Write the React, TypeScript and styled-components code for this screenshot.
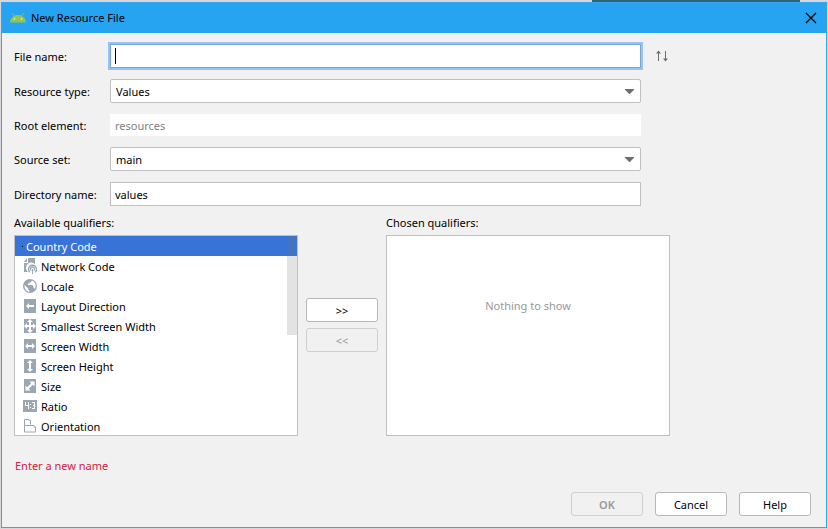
import React from "react";
import styled, { createGlobalStyle, css } from "styled-components";

const GlobalStyle = createGlobalStyle`
  *, *::before, *::after { box-sizing: border-box; }
  body { margin: 0; background: #d6d7da; }
  body, button, input, select {
    font-family: "Noto Sans", "Open Sans", sans-serif;
    font-size: 11px;
    line-height: 20px;
    color: #000;
  }
`;

const Screen = styled.div`
  display: flex;
  flex-direction: column;
  min-height: 100vh;
  padding: 0 1px 1px;
`;

const Backdrop = styled.div`
  display: flex;
  justify-content: flex-end;
  height: 2px;
  padding-right: 27px;
`;

const BackdropTab = styled.div`
  width: 208px;
  background: #2d6478;
`;

const Dialog = styled.main`
  flex: 1;
  display: flex;
  flex-direction: column;
  border: 1px solid #38a5ea;
  background: #f1f1f1;
`;

const TitleBar = styled.header`
  display: flex;
  align-items: center;
  height: 30px;
  padding: 0 9px 0 8px;
  gap: 5px;
  background: #26a4f2;
`;

const Title = styled.h1`
  flex: 1;
  margin: 0;
  font-size: 11px;
  font-weight: 400;
`;

const IconButton = styled.button`
  display: flex;
  padding: 0;
  border: 0;
  background: none;
`;

const Content = styled.div`
  display: flex;
  flex-direction: column;
  padding: 11px 156px 0 12px;
`;

const Form = styled.div`
  display: grid;
  grid-template-columns: 96px 1fr 28px;
  row-gap: 11px;
  align-items: center;
  padding-right: 1px;
`;

const Label = styled.label`
  grid-column: 1;
  padding-top: 2px;
  white-space: nowrap;
`;

const Field = styled.div`
  grid-column: 2;
  position: relative;
  display: flex;
`;

const SortCell = styled.div`
  grid-column: 3;
  display: flex;
  justify-content: flex-end;
`;

const TextInput = styled.input<{ $focused?: boolean }>`
  flex: 1;
  min-width: 0;
  height: 24px;
  padding: 1px 4px 0;
  border: 1px solid #c0c0c0;
  border-radius: 0;
  background: #fff;
  outline: none;
  ${(p) =>
    p.$focused &&
    css`
      border-color: #7ba4d9;
      box-shadow: 0 0 0 2px #97c3f3;
      caret-color: transparent;
    `}
  &:disabled {
    height: 22px;
    padding: 1px 5px 0;
    border: 0;
    color: #808080;
  }
`;

const Caret = styled.span`
  position: absolute;
  left: 5px;
  top: 4px;
  width: 1px;
  height: 16px;
  background: #000;
`;

const Select = styled.select`
  appearance: none;
  flex: 1;
  height: 24px;
  padding: 1px 24px 0 5px;
  border: 1px solid #c0c0c0;
  border-radius: 2px;
  background: #fff;
  outline: none;
`;

const Arrow = styled.svg`
  position: absolute;
  right: 7px;
  top: 10px;
  pointer-events: none;
`;

const Qualifiers = styled.div`
  display: grid;
  grid-template-columns: 1fr 72px 1fr;
  column-gap: 8px;
  margin-top: 7px;
`;

const ListTitle = styled.h2`
  margin: 0;
  height: 22px;
  font-size: 11px;
  line-height: 20px;
  font-weight: 400;
`;

const ListBox = styled.div`
  position: relative;
  height: 201px;
  border: 1px solid #c0c0c0;
  background: #fff;
  overflow: hidden;
`;

const List = styled.ul`
  margin: 0;
  padding: 0;
  list-style: none;
`;

const Item = styled.li<{ $selected?: boolean }>`
  display: flex;
  align-items: center;
  gap: 4px;
  height: 20px;
  padding-left: 8px;
  line-height: 18px;
  white-space: nowrap;
  ${(p) =>
    p.$selected &&
    css`
      padding-left: 7px;
      gap: 3px;
      background: #3874d8;
      color: #fff;
    `}
`;

const ItemName = styled.span`
  padding-top: 2px;
`;

const Dot = styled.span`
  width: 1px;
  height: 1px;
  background: #000;
`;

const Thumb = styled.div`
  position: absolute;
  right: 0;
  top: 0;
  width: 10px;
  height: 99px;
  background: rgba(115, 115, 115, 0.2);
`;

const Empty = styled.p`
  margin: 0;
  padding-top: 60px;
  text-align: center;
  color: #999;
`;

const Transfer = styled.div`
  display: flex;
  flex-direction: column;
  gap: 6px;
  padding-top: 85px;
`;

const Button = styled.button<{ $strong?: boolean }>`
  width: 72px;
  height: 24px;
  padding: 2px 0 0;
  border: 1px solid #b8b8b8;
  border-radius: 3px;
  background: #fff;
  text-align: center;
  font-weight: ${(p) => (p.$strong ? 600 : 400)};
  &:disabled {
    border-color: #cfcfcf;
    background: #f1f1f1;
    color: #999;
  }
`;

const Message = styled.p`
  margin: 20px 0 0 1px;
  color: #d0213f;
`;

const Footer = styled.footer`
  display: flex;
  justify-content: flex-end;
  gap: 12px;
  margin-top: auto;
  padding: 0 15px 11px;
`;

const ItemIcon = styled.svg`
  flex: none;
`;

const G = "#9aa7b0";

const ComboArrow = () => (
  <Arrow width="9" height="5" viewBox="0 0 9 5" aria-hidden="true">
    <path d="M0 0h9v.8L4.800 5h-.6L0 .8z" fill="#6e6e6e" />
  </Arrow>
);

const tile = <path d="M1 1h12v14H1z" fill={G} />;

const icons: Record<string, React.ReactNode> = {
  network: (
    <>
      <path d="M5 0h7v6.200A4.800 4.800 0 0 0 4.500 13.500V14H1V5h4zM4 0v4H1z" fill={G} />
      <g fill="none" stroke={G} strokeWidth="1.300">
        <path d="M6.800 14.200a4 4 0 1 1 5.400 0" />
        <path d="M8.300 12.600a2 2 0 1 1 2.400 0" />
      </g>
      <path d="M9 11h1v5H9z" fill={G} />
    </>
  ),
  locale: (
    <>
      <circle cx="7" cy="8" r="7" fill={G} />
      <path
        d="M1.600 7l3.600 3.500v1l1.300 1.200v1C3 13.300 1.100 10.500 1.600 7zM8.800 2.500c3.500 1 5 5 3.100 8.400-.4-.7-.8-.9-1.500-.9V8L9.500 7H5V5.600h1.600V4.300H8z"
        fill="#fff"
      />
    </>
  ),
  direction: (
    <>
      {tile}
      <path d="M3 8l3-3v2h5v2H6v2z" fill="#fff" />
    </>
  ),
  smallest: (
    <>
      {tile}
      <path
        d="M7 1l3 3H8v3h2V5l3 3-3 3V9H8v3h2l-3 3-3-3h2V9H4v2L1 8l3-3v2h2V4H4z"
        fill="#fff"
      />
    </>
  ),
  width: (
    <>
      {tile}
      <path d="M2 8l3-3v2h4V5l3 3-3 3V9H5v2z" fill="#fff" />
    </>
  ),
  height: (
    <>
      {tile}
      <path d="M7 2l3 3H8v6h2l-3 3-3-3h2V5H4z" fill="#fff" />
    </>
  ),
  size: (
    <>
      {tile}
      <path d="M11.500 3.500v5L9.800 6.800 5.800 10.800l1.700 1.700h-5v-5l1.700 1.700 4-4L6.500 3.500z" fill="#fff" />
    </>
  ),
  ratio: (
    <>
      <path d="M0 2h14v12H0z" fill={G} />
      <path
        d="M2 4h1v3h2V4h1v7H5V8H2zM7 6h1v1H7zM7 9h1v1H7zM9 4h3v7H9v-1h2V8h-1V7h1V5H9z"
        fill="#fff"
      />
    </>
  ),
  orientation: (
    <>
      <path
        d="M1.500 7.500v-6H6v1h1.500v4"
        fill="none"
        stroke={G}
        strokeWidth="1"
      />
      <path
        d="M1.500 7.500H11v1.500h1.500v5h-11z"
        fill="none"
        stroke={G}
        strokeWidth="1"
      />
    </>
  ),
};

const qualifiers = [
  ["network", "Network Code"],
  ["locale", "Locale"],
  ["direction", "Layout Direction"],
  ["smallest", "Smallest Screen Width"],
  ["width", "Screen Width"],
  ["height", "Screen Height"],
  ["size", "Size"],
  ["ratio", "Ratio"],
  ["orientation", "Orientation"],
];

export default function App() {
  return (
    <>
      <GlobalStyle />
      <Screen>
        <Backdrop>
          <BackdropTab />
        </Backdrop>
        <Dialog>
          <TitleBar>
            <svg width="16" height="10" viewBox="0 0 16 10" aria-hidden="true">
              <path
                d="M2.500.500l2 2.500M13.500.500l-2 2.500"
                stroke="#93c452"
                strokeWidth="1"
                strokeLinecap="round"
              />
              <path d="M0 9.500C.3 4.500 4 2 8 2s7.700 2.500 8 7.500z" fill="#93c452" />
              <circle cx="4.500" cy="6" r=".8" fill="#fff" />
              <circle cx="11.500" cy="6" r=".8" fill="#fff" />
            </svg>
            <Title>New Resource File</Title>
            <IconButton type="button" aria-label="Close">
              <svg width="12" height="12" viewBox="0 0 12 12">
                <path d="M1 1l10 10M11 1L1 11" stroke="#000" strokeWidth="1.200" />
              </svg>
            </IconButton>
          </TitleBar>
          <Content>
            <Form>
              <Label htmlFor="file">File name:</Label>
              <Field>
                <TextInput id="file" $focused />
                <Caret />
              </Field>
              <SortCell>
                <IconButton type="button" aria-label="Swap">
                  <svg width="14" height="12" viewBox="0 0 14 12">
                    <path
                      d="M3.500 11V2M10.500 1v9"
                      fill="none"
                      stroke="#6e6e6e"
                      strokeWidth="1"
                    />
                    <path d="M3.500.500L6 3.500H1zM10.500 11.500L8 8.500h5z" fill="#6e6e6e" />
                  </svg>
                </IconButton>
              </SortCell>
              <Label htmlFor="type">Resource type:</Label>
              <Field>
                <Select id="type">
                  <option>Values</option>
                </Select>
                <ComboArrow />
              </Field>
              <Label htmlFor="root-element">Root element:</Label>
              <Field>
                <TextInput id="root-element" defaultValue="resources" disabled />
              </Field>
              <Label htmlFor="source">Source set:</Label>
              <Field>
                <Select id="source">
                  <option>main</option>
                </Select>
                <ComboArrow />
              </Field>
              <Label htmlFor="directory">Directory name:</Label>
              <Field>
                <TextInput id="directory" defaultValue="values" />
              </Field>
            </Form>
            <Qualifiers>
              <section>
                <ListTitle id="available">Available qualifiers:</ListTitle>
                <ListBox>
                  <List role="listbox" aria-labelledby="available">
                    <Item role="option" aria-selected="true" $selected>
                      <Dot />
                      <ItemName>Country Code</ItemName>
                    </Item>
                    {qualifiers.map(([icon, name]) => (
                      <Item key={name} role="option" aria-selected="false">
                        <ItemIcon width="14" height="16" viewBox="0 0 14 16" aria-hidden="true">
                          {icons[icon]}
                        </ItemIcon>
                        <ItemName>{name}</ItemName>
                      </Item>
                    ))}
                  </List>
                  <Thumb />
                </ListBox>
              </section>
              <Transfer>
                <Button type="button">&gt;&gt;</Button>
                <Button type="button" disabled>
                  &lt;&lt;
                </Button>
              </Transfer>
              <section>
                <ListTitle>Chosen qualifiers:</ListTitle>
                <ListBox>
                  <Empty>Nothing to show</Empty>
                </ListBox>
              </section>
            </Qualifiers>
            <Message>Enter a new name</Message>
          </Content>
          <Footer>
            <Button type="button" disabled $strong>
              OK
            </Button>
            <Button type="button">Cancel</Button>
            <Button type="button">Help</Button>
          </Footer>
        </Dialog>
      </Screen>
    </>
  );
}
